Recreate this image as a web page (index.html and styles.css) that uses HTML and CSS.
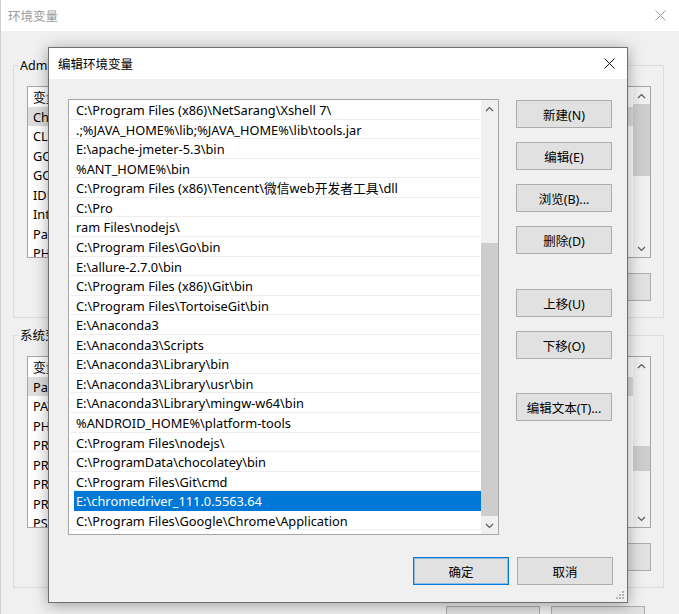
FILE: index.html
```html
<!DOCTYPE html>
<html lang="zh-CN">
<head>
<meta charset="utf-8">
<title>编辑环境变量</title>
<link rel="stylesheet" href="styles.css">
</head>
<body>
<div class="screen">
  <div class="bgwin">
    <div class="bg-titlebar">
      <span class="bg-title">环境变量</span>
      <svg class="bg-close" width="11" height="11" viewBox="0 0 11 11"><path d="M0.5 0.5 L10.5 10.5 M10.5 0.5 L0.5 10.5" stroke="#9a9a9a" stroke-width="1" fill="none"/></svg>
    </div>
    <div class="bg-body">
      <div class="group">
        <div class="group-label">Administrator 的用户变量(U)</div>
        <div class="varlist">
          <div class="varlist-main">
            <div class="vhead">变量</div>
            <div class="vrow sel">ChocolateyInstall</div>
            <div class="vrow">CLION</div>
            <div class="vrow">GOPATH</div>
            <div class="vrow">GOROOT</div>
            <div class="vrow">IDEA</div>
            <div class="vrow">IntelliJ IDEA</div>
            <div class="vrow">Path</div>
            <div class="vrow">PHPSTORM</div>
          </div>
          <div class="vscroll">
            <div class="sb-arrow"><svg width="9" height="6" viewBox="0 0 9 6"><path d="M1 5 L4.5 1.5 L8 5" fill="none" stroke="#5a5a5a" stroke-width="1.2"/></svg></div>
            <div class="sb-track"><div class="sb-thumb thumb-user"></div></div>
            <div class="sb-arrow"><svg width="9" height="6" viewBox="0 0 9 6"><path d="M1 1 L4.5 4.5 L8 1" fill="none" stroke="#5a5a5a" stroke-width="1.2"/></svg></div>
          </div>
        </div>
        <div class="btnrow">
          <button class="btn btn-bg">新建(N)...</button>
          <button class="btn btn-bg">编辑(E)...</button>
          <button class="btn btn-bg">删除(D)</button>
        </div>
      </div>
      <div class="group group-sys">
        <div class="group-label">系统变量(S)</div>
        <div class="varlist">
          <div class="varlist-main">
            <div class="vhead">变量</div>
            <div class="vrow sel">Path</div>
            <div class="vrow">PATHEXT</div>
            <div class="vrow">PHPSTORM</div>
            <div class="vrow">PROCESSOR_ARCHITECTURE</div>
            <div class="vrow">PROCESSOR_IDENTIFIER</div>
            <div class="vrow">PROCESSOR_LEVEL</div>
            <div class="vrow">PROCESSOR_REVISION</div>
            <div class="vrow">PSModulePath</div>
          </div>
          <div class="vscroll">
            <div class="sb-arrow"><svg width="9" height="6" viewBox="0 0 9 6"><path d="M1 5 L4.5 1.5 L8 5" fill="none" stroke="#5a5a5a" stroke-width="1.2"/></svg></div>
            <div class="sb-track"><div class="sb-thumb thumb-sys"></div></div>
            <div class="sb-arrow"><svg width="9" height="6" viewBox="0 0 9 6"><path d="M1 1 L4.5 4.5 L8 1" fill="none" stroke="#5a5a5a" stroke-width="1.2"/></svg></div>
          </div>
        </div>
        <div class="btnrow">
          <button class="btn btn-bg">新建(W)...</button>
          <button class="btn btn-bg">编辑(I)...</button>
          <button class="btn btn-bg">删除(L)</button>
        </div>
      </div>
      <div class="bg-footer">
        <button class="btn btn-foot">确定</button>
        <button class="btn btn-foot">取消</button>
      </div>
    </div>
  </div>

  <div class="dialog">
    <div class="dlg-titlebar">
      <span class="dlg-title">编辑环境变量</span>
      <svg class="dlg-close" width="11" height="11" viewBox="0 0 11 11"><path d="M0.5 0.5 L10.5 10.5 M10.5 0.5 L0.5 10.5" stroke="#111" stroke-width="1" fill="none"/></svg>
    </div>
    <div class="dlg-body">
      <div class="pathlist">
        <div class="pl-rows">
          <div class="pl-row">C:\Program Files (x86)\NetSarang\Xshell 7\</div>
          <div class="pl-row">.;%JAVA_HOME%\lib;%JAVA_HOME%\lib\tools.jar</div>
          <div class="pl-row">E:\apache-jmeter-5.3\bin</div>
          <div class="pl-row">%ANT_HOME%\bin</div>
          <div class="pl-row">C:\Program Files (x86)\Tencent\微信web开发者工具\dll</div>
          <div class="pl-row">C:\Pro</div>
          <div class="pl-row">ram Files\nodejs\</div>
          <div class="pl-row">C:\Program Files\Go\bin</div>
          <div class="pl-row">E:\allure-2.7.0\bin</div>
          <div class="pl-row">C:\Program Files (x86)\Git\bin</div>
          <div class="pl-row">C:\Program Files\TortoiseGit\bin</div>
          <div class="pl-row">E:\Anaconda3</div>
          <div class="pl-row">E:\Anaconda3\Scripts</div>
          <div class="pl-row">E:\Anaconda3\Library\bin</div>
          <div class="pl-row">E:\Anaconda3\Library\usr\bin</div>
          <div class="pl-row">E:\Anaconda3\Library\mingw-w64\bin</div>
          <div class="pl-row">%ANDROID_HOME%\platform-tools</div>
          <div class="pl-row">C:\Program Files\nodejs\</div>
          <div class="pl-row">C:\ProgramData\chocolatey\bin</div>
          <div class="pl-row">C:\Program Files\Git\cmd</div>
          <div class="pl-row sel">E:\chromedriver_111.0.5563.64</div>
          <div class="pl-row">C:\Program Files\Google\Chrome\Application</div>
        </div>
        <div class="pl-scroll">
          <div class="sb-arrow"><svg width="9" height="6" viewBox="0 0 9 6"><path d="M1 5 L4.5 1.5 L8 5" fill="none" stroke="#5a5a5a" stroke-width="1.2"/></svg></div>
          <div class="sb-track"><div class="sb-thumb thumb-path"></div></div>
          <div class="sb-arrow"><svg width="9" height="6" viewBox="0 0 9 6"><path d="M1 1 L4.5 4.5 L8 1" fill="none" stroke="#5a5a5a" stroke-width="1.2"/></svg></div>
        </div>
      </div>
      <div class="side">
        <button class="btn side-btn">新建(N)</button>
        <button class="btn side-btn">编辑(E)</button>
        <button class="btn side-btn">浏览(B)...</button>
        <button class="btn side-btn">删除(D)</button>
        <button class="btn side-btn gap-big">上移(U)</button>
        <button class="btn side-btn">下移(O)</button>
        <button class="btn side-btn gap-big2">编辑文本(T)...</button>
      </div>
    </div>
    <div class="dlg-footer">
      <button class="btn dlg-btn default">确定</button>
      <button class="btn dlg-btn">取消</button>
    </div>
    <svg class="grip" width="8" height="8" viewBox="0 0 8 8"><g fill="#b4b4b4"><rect x="6" y="0" width="2" height="2"/><rect x="3" y="3" width="2" height="2"/><rect x="6" y="3" width="2" height="2"/><rect x="0" y="6" width="2" height="2"/><rect x="3" y="6" width="2" height="2"/><rect x="6" y="6" width="2" height="2"/></g></svg>
  </div>
</div>
</body>
</html>
```

FILE: styles.css
```css
* { box-sizing: border-box; }
html, body { margin: 0; padding: 0; }
body {
  width: 679px;
  height: 614px;
  overflow: hidden;
  background: #f0f0f0;
  font-family: "Noto Sans", "Noto Sans CJK SC", sans-serif;
  font-size: 12.5px;
  color: #000;
}
.screen {
  position: relative;
  width: 679px;
  height: 614px;
  overflow: hidden;
}

/* background window */
.bgwin {
  width: 679px;
  height: 614px;
  background: #f0f0f0;
  border-left: 1px solid #cfcfcf;
  display: flex;
  flex-direction: column;
}
.bg-titlebar {
  height: 31px;
  flex: none;
  background: #fff;
  display: flex;
  align-items: center;
  justify-content: space-between;
  padding: 0 13px 0 7px;
}
.bg-title { color: #9a9a9a; font-size: 12.5px; }
.bg-body {
  padding: 34px 15px 0 12px;
}
.group {
  border: 1px solid #dcdcdc;
  padding: 0 12px 16px 13px;
}
.group-sys { margin-top: 17px; }
.group-label {
  width: max-content;
  margin: -9px 0 0 -8px;
  padding: 0 1px;
  line-height: 17px;
  background: #f0f0f0;
}
.varlist {
  margin-top: 12px;
  height: 172px;
  border: 1px solid #a6a6a6;
  background: #fff;
  display: flex;
}
.varlist-main { flex: 1; overflow: hidden; font-size: 12.8px; }
.vhead, .vrow {
  height: 19.5px;
  line-height: 19.5px;
  padding: 1px 0 0 5px;
  white-space: nowrap;
}
.vrow.sel { background: #dedede; }
.vscroll, .pl-scroll {
  width: 17px;
  flex: none;
  background: #f0f0f0;
  display: flex;
  flex-direction: column;
}
.sb-arrow {
  height: 17px;
  flex: none;
  display: flex;
  align-items: center;
  justify-content: center;
}
.sb-track { flex: 1; display: flex; flex-direction: column; }
.sb-thumb { background: #cdcdcd; }
.thumb-user { height: 72px; }
.thumb-sys { margin-top: 72px; height: 25px; }
.thumb-path { margin-top: 126px; height: 273px; }

.btnrow {
  margin-top: 15px;
  display: flex;
  justify-content: flex-end;
  gap: 10px;
}
.btn {
  height: 28px;
  padding: 0;
  background: #e1e1e1;
  border: 1px solid #adadad;
  font-family: inherit;
  font-size: 12.5px;
  color: #000;
}
.btn-bg { width: 94px; }
.bg-footer {
  margin-top: 18px;
  padding-right: 19px;
  display: flex;
  justify-content: flex-end;
  gap: 11px;
}
.btn-foot { width: 94px; }

/* dialog */
.dialog {
  position: absolute;
  left: 48px;
  top: 47px;
  width: 580px;
  height: 556px;
  border: 1px solid #707070;
  background: #f0f0f0;
  box-shadow: 0 2px 14px rgba(0, 0, 0, 0.35);
  display: flex;
  flex-direction: column;
}
.dlg-titlebar {
  height: 31px;
  flex: none;
  background: #fff;
  display: flex;
  align-items: center;
  justify-content: space-between;
  padding: 0 12px 0 9px;
}
.dlg-title { font-size: 12.5px; }
.dlg-body {
  display: flex;
  gap: 17px;
  padding: 20px 14px 0 19px;
}
.pathlist {
  width: 431px;
  height: 436px;
  flex: none;
  border: 1px solid #a6a6a6;
  background: #fff;
  display: flex;
}
.pl-rows {
  flex: 1;
  padding-left: 1px;
  overflow: hidden;
  font-size: 12.8px;
}
.pl-row {
  height: 19.57px;
  line-height: 19.57px;
  padding: 1px 0 0 6px;
  white-space: nowrap;
  box-shadow: inset 0 -1px 0 #eeeeee;
}
.pl-row.sel {
  background: #0078d7;
  color: #fff;
  margin-left: 4px;
  padding-left: 2px;
  box-shadow: none;
}
.side {
  width: 96px;
  flex: none;
  display: flex;
  flex-direction: column;
  gap: 14px;
  padding-top: 1px;
}
.side-btn { width: 96px; }
.gap-big { margin-top: 21px; }
.gap-big2 { margin-top: 20px; }
.dlg-footer {
  display: flex;
  justify-content: flex-end;
  gap: 8px;
  padding: 22px 14px 17px 0;
}
.dlg-btn { width: 96px; }
.dlg-btn.default {
  border-color: #0078d7;
  box-shadow: inset 0 0 0 1px rgba(0, 120, 215, 0.35);
}
.grip {
  position: absolute;
  right: 3px;
  bottom: 3px;
}
```
